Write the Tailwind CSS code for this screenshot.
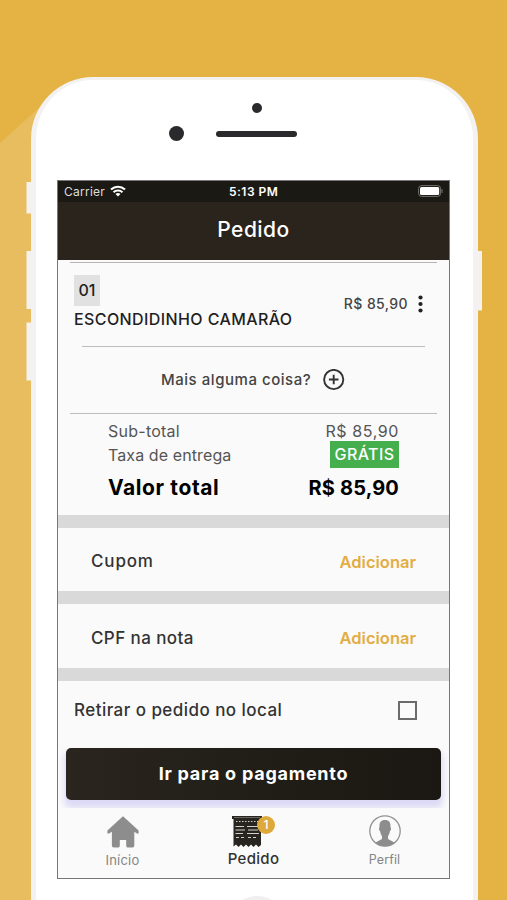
<!DOCTYPE html>
<html lang="pt-BR">
<head>
<meta charset="utf-8">
<title>Pedido</title>
<script src="https://cdn.jsdelivr.net/npm/@tailwindcss/browser@4"></script>
</head>
<body class="bg-[#e5b344]">
<main class="relative isolate h-[900px] w-[507px] overflow-hidden bg-[#e5b344] pt-[77px] pl-[31px] font-['Inter','Noto_Sans',sans-serif] whitespace-nowrap text-[#333]">
  <!-- long shadow and side buttons -->
  <svg class="absolute inset-0 -z-10" width="507" height="900" viewBox="0 0 507 900">
    <path d="M0 143L40 107H100V900H0Z" fill="#e8bd5f"/>
    <g fill="#f3f2f0"><rect x="26.5" y="182" width="8" height="31.500"/><rect x="26.500" y="251" width="8" height="58"/><rect x="26.500" y="322.500" width="8" height="58"/><rect x="474" y="251" width="8" height="59.500"/></g>
  </svg>

  <div class="relative h-[900px] w-[447px] rounded-t-[62px] border-[5px] border-b-0 border-[#f3f2f1] border-t-[3px] bg-white">
    <header class="flex h-[100px] flex-col items-center pt-[23px]">
      <span class="mr-0 ml-[4px] size-[10px] rounded-full bg-[#2a2a2c]"></span>
      <div class="mt-[13px] flex h-[15px] w-full items-center pl-[133px]">
        <span class="size-[15px] rounded-full bg-[#2a2a2c]"></span>
        <span class="ml-[32px] h-[6px] w-[81px] rounded-full bg-[#2a2a2c]"></span>
      </div>
    </header>

    <section class="ml-[21px] flex h-[699px] w-[393px] flex-col bg-[#fafafa] outline-1 -outline-offset-1 outline-[#77777a]">
      <div class="flex h-[22px] shrink-0 items-center bg-[#1b1913] px-[7px] text-white">
        <span class="w-[46px] pt-px text-[12px] tracking-[0.25px] text-[#ddd]">Carrier</span>
        <svg width="16" height="12" viewBox="0 0 16 12" fill="none" stroke="#fff" stroke-width="2.100"><path d="M1 4.600C5 .8 11 .8 15 4.600M3.500 7.200C6 4.900 10 4.900 12.500 7.200"/><path d="M8 11.500L5.500 9C7 7.700 9 7.700 10.500 9Z" fill="#fff" stroke="none"/></svg>
        <span class="ml-[103px] pt-px text-[12px] font-semibold tracking-[0.500px]">5:13 PM</span>
        <svg class="ml-auto" width="25" height="12" viewBox="0 0 25 12"><rect x=".6" y=".6" width="22" height="10.800" rx="3" fill="none" stroke="#77736f"/><rect x="2" y="2" width="19.200" height="8" rx="1.500" fill="#fff"/><path d="M24 4V8" stroke="#77736f"/></svg>
      </div>
      <h1 class="flex h-[58px] shrink-0 items-center justify-center bg-[#2b241d] pb-[2px] text-[21px] font-medium tracking-[0.450px] text-white">Pedido</h1>

      <div class="mx-[13px] mt-[2px] h-px shrink-0 bg-[#bbb3b3]"></div>
      <div class="flex h-[83px] shrink-0 justify-between pr-[27px] pl-[17px] text-[#1f1f1f]">
        <div class="pt-[12px]">
          <span class="flex h-[31px] w-[26px] items-center justify-center bg-[#e1e1e1] pb-[2px] text-[16px] font-medium">01</span>
          <p class="mt-px text-[16px] leading-[24px] font-medium tracking-[0.400px]">ESCONDIDINHO CAMARÃO</p>
        </div>
        <div class="flex h-[82px] items-center gap-[10px] text-[#444]">
          <span class="pb-[2px] text-[14px] font-medium tracking-[0.400px]">R$ 85,90</span>
          <svg width="5" height="18" viewBox="0 0 5 18" fill="#222"><circle cx="2.500" cy="2.500" r="2.100"/><circle cx="2.500" cy="9" r="2.100"/><circle cx="2.500" cy="15.500" r="2.100"/></svg>
        </div>
      </div>
      <div class="mx-[25px] h-px shrink-0 bg-[#bdbdbd]"></div>
      <div class="flex h-[66px] shrink-0 items-center pl-[104px]">
        <span class="w-[162px] pt-px text-[15px] font-medium tracking-[0.540px] text-[#444]">Mais alguma coisa?</span>
        <svg width="22" height="22" viewBox="0 0 22 22" fill="none" stroke="#333" stroke-width="1.900"><circle cx="10.700" cy="10.500" r="9.600"/><path d="M5.900 10.500H15.500M10.700 5.700V15.300"/></svg>
      </div>
      <div class="mx-[13px] h-px shrink-0 bg-[#bdbdbd]"></div>
      <div class="flex h-[101px] shrink-0 flex-col pt-[6px] pr-[51px] pl-[51px]">
        <div class="flex h-[21px] items-center justify-between pt-px text-[16px] text-[#555]"><span class="tracking-[0.250px]">Sub-total</span><span class="tracking-[0.600px]">R$ 85,90</span></div>
        <div class="flex h-[27px] items-center justify-between text-[16px] text-[#555]"><span class="tracking-[0.100px]">Taxa de entrega</span><span class="flex h-[27px] w-[69px] items-center justify-center bg-[#45ae4d] pb-px text-[16px] font-medium tracking-[0.400px] text-white">GRÁTIS</span></div>
        <div class="flex h-[40px] items-center justify-between text-[20px] font-bold text-black"><span class="text-[21px] tracking-[0.600px]">Valor total</span><span class="tracking-[0.150px]">R$ 85,90</span></div>
      </div>
      <div class="h-[13px] shrink-0 bg-[#d9d9d9]"></div>
      <div class="flex h-[63px] shrink-0 items-center justify-between pt-[5px] pr-[34px] pl-[34px] text-[17px] font-medium"><span class="tracking-[0.850px]">Cupom</span><span class="text-[16.500px] font-semibold text-[#e2ad43]">Adicionar</span></div>
      <div class="h-[13px] shrink-0 bg-[#d9d9d9]"></div>
      <div class="flex h-[64px] shrink-0 items-center justify-between pt-[4px] pr-[34px] pl-[34px] text-[17px] font-medium"><span class="pt-[2px] tracking-[0.400px]">CPF na nota</span><span class="text-[16.500px] font-semibold text-[#e2ad43]">Adicionar</span></div>
      <div class="h-[13px] shrink-0 bg-[#d9d9d9]"></div>
      <div class="flex h-[58px] shrink-0 items-center justify-between pr-[33px] pl-[17px] text-[17px] font-medium"><span class="pt-px tracking-[0.450px]">Retirar o pedido no local</span><span class="size-[19px] border-2 border-[#6b6b6b]"></span></div>
      <div class="relative mx-px h-[69px] shrink-0 overflow-hidden px-[8px] pt-[9px]">
        <button class="block h-[52px] w-[375px] rounded-[5px] bg-linear-to-r from-[#2a251e] via-[#211e18] to-[#1b1813] pb-[2px] text-[18px] font-bold tracking-[0.750px] text-white shadow-[0_6px_6px_2px_#dcdaf5]">Ir para o pagamento</button>
      </div>
      <nav class="mx-px mb-px flex h-[69px] shrink-0 text-center text-[#858585]">
        <a class="flex w-[129px] flex-col items-center pt-[8px]">
          <svg width="32" height="32" viewBox="0 0 32 32" fill="#8d8d8d"><path d="M16 .2L31.600 14.600V17Q31.400 18 30 17.500L27.300 15.700V29.500Q27.300 31.500 25.500 31.500H20.500Q19.200 31.500 19.200 29.500V24H12.800V29.500Q12.800 31.500 11.500 31.500H6.700Q4.900 31.500 4.900 29.500V15.700L2 17.500Q.6 18 .4 17V14.600Z"/></svg>
          <span class="mt-[3px] text-[13px] leading-[18px] tracking-[0.200px]">Início</span>
        </a>
        <a class="relative flex w-[133px] flex-col items-center pt-[7px] text-[#333]">
          <svg class="mr-[14px]" width="32" height="32" viewBox="0 0 32 32"><path d="M1 1H31V4H30V30L27.500 32L25 29.500L22.500 32L20 29.500L17.500 32L15 29.500L12.500 32L10 29.500L7.500 32L5 29.500L2.500 31.500V4H1Z" fill="#28241f"/><path d="M3 2.500H29" stroke="#69655f"/><g stroke="#d3d0ca" fill="none"><path d="M5 6.500H28" stroke-dasharray="1.500 1.500"/><path d="M4.500 11.500H13M16 11.500H27M4.500 15H14M17 15H27M4.500 18.500H12M16 18.500H28"/><path d="M5 22.500H15M17 22.500H27" stroke-dasharray="3 2"/></g></svg>
          <span class="absolute top-[8px] left-[70px] flex size-[18px] items-center justify-center rounded-full bg-[#dea93b] text-[12px] font-medium text-white">1</span>
          <span class="text-[15px] leading-[23px] font-medium tracking-[0.300px]">Pedido</span>
        </a>
        <a class="flex w-[129px] flex-col items-center pt-[7px]">
          <svg width="32" height="32" viewBox="0 0 32 32"><circle cx="16" cy="16" r="15.200" fill="#fafafa" stroke="#929292" stroke-width="1.300"/><path d="M16 5C12 5 10.200 7.500 10.500 12L9.900 14Q10 15.500 11 16Q11.500 19 13 21.200V24L6.500 27.500Q10.500 31.200 16 31.200Q21.500 31.200 25.500 27.500L19 24V21.200Q20.500 19 21 16Q22 15.500 22.100 14L21.500 12C21.800 7.500 20 5 16 5Z" fill="#8d8d8d"/></svg>
          <span class="mt-[4px] text-[12.500px] leading-[18px] tracking-[0.100px]">Perfil</span>
        </a>
      </nav>
    </section>
    <div class="mr-auto ml-[191px] mt-[17px] size-[60px] rounded-full bg-[#efefef]"></div>
  </div>
</main>
</body>
</html>
